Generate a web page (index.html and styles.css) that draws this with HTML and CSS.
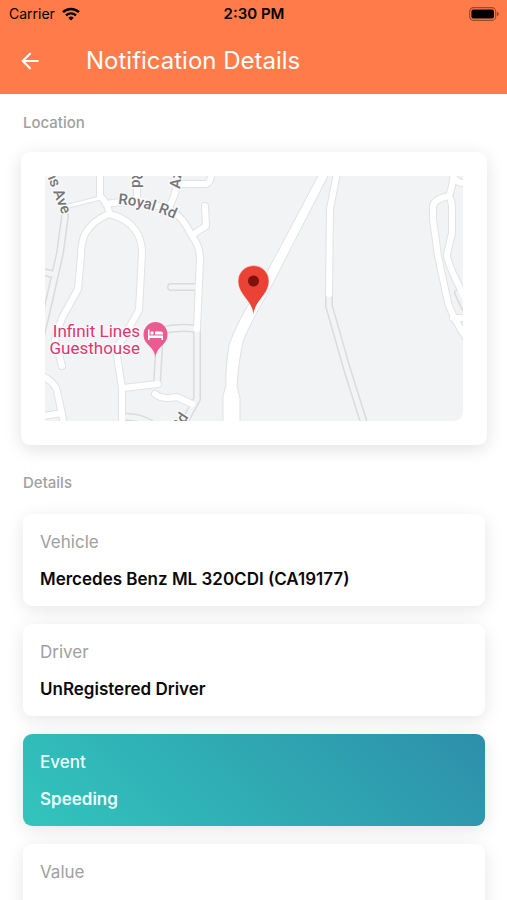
FILE: index.html
```html
<!DOCTYPE html>
<html lang="en">
<head>
<meta charset="utf-8">
<meta name="viewport" content="width=device-width, initial-scale=1">
<title>Notification Details</title>
<link rel="stylesheet" href="styles.css">
</head>
<body>
<div class="screen">
  <header class="header">
    <div class="status">
      <div class="status-carrier">
        <span>Carrier</span>
        <svg class="wifi" viewBox="0 0 18 14" aria-hidden="true">
          <path d="M1 5.2a11.6 11.6 0 0 1 16 0" fill="none" stroke="#000" stroke-width="2.5"/>
          <path d="M4 8.3a7.3 7.3 0 0 1 10 0" fill="none" stroke="#000" stroke-width="2.3"/>
          <path d="M6.3 10.7a3.9 3.9 0 0 1 5.4 0L9 13.6z"/>
        </svg>
      </div>
      <time class="status-time">2:30 PM</time>
      <svg class="battery" viewBox="0 0 30 14" aria-hidden="true">
        <rect x=".7" y=".7" width="26" height="12.6" rx="3.8" fill="none" stroke="#000" stroke-opacity=".4" stroke-width="1.2"/>
        <rect x="2.4" y="2.4" width="22.6" height="9.2" rx="2"/>
        <path d="M28 5v4c1-.3 1.700-1.100 1.700-2S29 5.300 28 5z" fill-opacity=".45"/>
      </svg>
    </div>
    <div class="bar">
      <button class="back" type="button" aria-label="Back">
        <svg viewBox="0 0 18 18" aria-hidden="true">
          <path d="M16 9H2.500M9 2.500 2.500 9 9 15.500" fill="none" stroke="#fff" stroke-width="2" stroke-linecap="round" stroke-linejoin="round"/>
        </svg>
      </button>
      <h1>Notification Details</h1>
    </div>
  </header>

  <main class="content">
    <h2>Location</h2>
    <section class="map-card">
      <svg class="map" viewBox="0 0 418 245" role="img" aria-label="Map">
        <defs>
          <g id="tracks">
            <path d="M20 40 15 77 3 130-4 160M-2 96 7 98"/>
            <path d="M126 111H152"/>
            <path d="M112 208 115 155Q133 150 152 153V223L140 245"/>
            <path d="M284 118V130L302 193 319 247"/>
            <path d="M78 241Q92 240 105 247M413 117 420 132"/>
          </g>
          <g id="streets">
            <path d="M55-3V20Q64 28 64 38Q47 45 40 58Q36 66 36 80L33 113 17 142 10 163 17 190"/>
            <path d="M64 38Q82 42 91 55Q97 64 97 78L94 134 78 163Q72 168 72 180L77 212V248"/>
            <path d="M61 28 75 26 100 27 125 33Q138 41 147 60Q155 70 155 83L152 153"/>
            <path d="M147 59 161 50 160 30"/>
            <path d="M122 34Q130 22 132 8L161 8Q166 7 166-3"/>
            <path d="M92 22V-3"/>
            <path d="M-3 200Q10 206 12 215L19 248M-2 240 17 237"/>
            <path d="M78 212 113 208"/>
            <path d="M110 218Q117 224 132 221L147 228"/>
            <path d="M292-3 285 33 284 118"/>
            <path d="M409-3Q408 10 404 20Q389 23 388 30L388 43 393 80 403 127Q408 142 422 163"/>
            <path d="M404 20Q407 25 407 33V57Q404 69 402 79Q402 87 420 122"/>
            <path d="M408 0Q412 8 420 7M408 142 420 142"/>
          </g>
          <path id="royal-rd" d="M73 28Q105 30 140 48"/>
        </defs>
        <rect width="418" height="245" fill="#f1f3f4"/>
        <g class="road">
          <g stroke="#d9dbdc" stroke-width="8"><use href="#tracks"/></g>
          <g stroke="#e0e2e3" stroke-width="8"><use href="#streets"/><path d="M20 31 55 22" stroke-width="5"/></g>
          <g stroke="#f3f4f5" stroke-width="5"><use href="#tracks"/></g>
          <g stroke="#fff" stroke-width="6"><use href="#streets"/><path d="M20 31 55 22" stroke-width="3"/></g>
        </g>
        <path d="M274-2 212 115Q192 145 184 169Q180 195 181 209L178 220V246H195V222L192 210Q193 190 197 170Q199 158 224 115L284-2z" fill="#fff" stroke="#dfe1e2"/>
        <g class="road-name">
          <text transform="translate(1 -3) rotate(69)">ns Ave</text>
          <text><textPath href="#royal-rd">Royal Rd</textPath></text>
          <text transform="translate(87 -6) rotate(90)">Rd</text>
          <text transform="translate(135 13) rotate(-84)">Az</text>
          <text transform="translate(134 256) rotate(-57)">Rd</text>
        </g>
        <g class="place">
          <text x="95" y="161">Infinit Lines</text>
          <text x="95" y="178">Guesthouse</text>
        </g>
        <path d="M110.500 181C109 170 98.500 169 98.500 158.500a12 12.500 0 0 1 24 0C122.500 169 112 170 110.500 181z" fill="#ea5c91"/>
        <path d="M103 153.500h1.500v6H118v4.500h-1.500v-2h-12v2H103zM110 155.500h6q2 0 2 2v1h-8z" fill="#fff"/>
        <circle cx="107" cy="157" r="1.700" fill="#fff"/>
        <path d="M208.500 139C207 124 193 119 193 105a15.500 15.500 0 0 1 31 0C224 119 210 124 208.500 139z" fill="#ea4335" stroke="#fff" stroke-width=".5"/>
        <circle cx="208.500" cy="105" r="5.500" fill="#7f100b"/>
      </svg>
    </section>

    <h2>Details</h2>
    <dl class="details">
      <div class="detail"><dt>Vehicle</dt><dd>Mercedes Benz ML 320CDI (CA19177)</dd></div>
      <div class="detail"><dt>Driver</dt><dd>UnRegistered Driver</dd></div>
      <div class="detail detail-event"><dt>Event</dt><dd>Speeding</dd></div>
      <div class="detail"><dt>Value</dt><dd></dd></div>
    </dl>
  </main>
</div>
</body>
</html>
```
FILE: styles.css
```css
* {
  box-sizing: border-box;
}

body {
  margin: 0;
  background: #fff;
  color: #0a0a0a;
  font-family: Inter, "Liberation Sans", sans-serif;
}

h1,
h2,
dl,
dd {
  margin: 0;
}

.screen {
  display: flex;
  flex-direction: column;
  height: 100vh;
}

.header {
  flex: none;
  background: #ff7c4a;
}

.status {
  display: grid;
  grid-template-columns: 1fr auto 1fr;
  align-items: center;
  height: 27px;
  padding: 0 8px 0 9px;
  color: #000;
  font-size: 14px;
}

.status-carrier {
  display: flex;
  align-items: center;
  gap: 7px;
}

.wifi {
  width: 18px;
  height: 14px;
}

.status-time {
  font-size: 15px;
  font-weight: 600;
}

.battery {
  justify-self: end;
  width: 30px;
  height: 14px;
}

.bar {
  display: flex;
  align-items: center;
  gap: 46px;
  height: 67px;
  padding: 0 20px;
}

.back {
  display: flex;
  padding: 0;
  border: 0;
  background: none;
}

.back svg {
  width: 20px;
  height: 20px;
}

h1 {
  color: #fff;
  font-size: 24px;
  font-weight: 400;
  line-height: 28px;
}

.content {
  flex: 1;
  min-height: 0;
  overflow-y: auto;
  padding: 20px 22px 20px 23px;
  scrollbar-width: none;
}

h2 {
  color: #a0a0a0;
  font-size: 15px;
  font-weight: 500;
  line-height: 18px;
}

.map-card {
  margin: 20px -2px 29px;
  padding: 24px;
  border-radius: 9px;
  background: #fff;
  box-shadow: 0 4px 18px rgba(0, 0, 0, .12);
}

.map {
  display: block;
  width: 100%;
  border-radius: 0 0 9px 0;
}

.road {
  fill: none;
  stroke-linecap: round;
  stroke-linejoin: round;
}

.road-name {
  fill: #737578;
  stroke: #f8f9fa;
  stroke-width: 3px;
  paint-order: stroke;
  font: 500 15px Roboto, sans-serif;
}

.place {
  fill: #e0356f;
  stroke: #f8f9fa;
  stroke-width: 3px;
  paint-order: stroke;
  font: 400 17px Roboto, sans-serif;
  text-anchor: end;
}

.details {
  display: grid;
  gap: 18px;
  margin-top: 22px;
}

.detail {
  min-height: 92px;
  padding: 18px 17px 17px;
  border-radius: 9px;
  background: #fff;
  box-shadow: 0 4px 18px rgba(0, 0, 0, .1);
}

dt {
  color: #a0a0a0;
  font-size: 17px;
  font-weight: 400;
  line-height: 20px;
}

dd {
  margin-top: 17px;
  font-size: 17px;
  font-weight: 600;
  line-height: 20px;
}

.detail-event {
  background: linear-gradient(45deg, #32c5bc, #2d8fab);
  color: #e9fffd;
}

.detail-event dt {
  color: inherit;
  font-weight: 500;
}
```
